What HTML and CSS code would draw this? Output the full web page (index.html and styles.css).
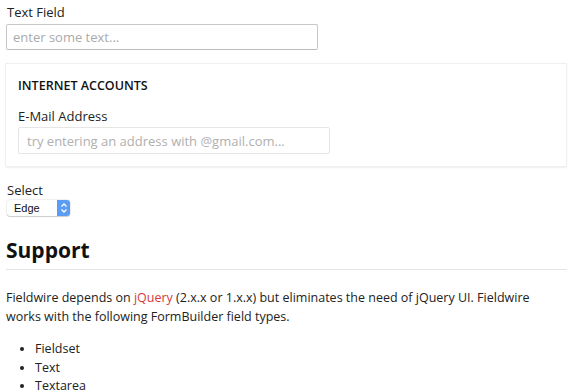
FILE: index.html
```html
<!DOCTYPE html>
<html lang="en">
<head>
    <meta charset="utf-8">
    <title>Fieldwire</title>
    <link rel="stylesheet" href="styles.css">
</head>
<body>
    <!-- text field -->
    <div class="field">
        <label for="txt">Text Field</label>
        <input type="text" id="txt" class="txtInput" placeholder="enter some text...">
    </div>

    <!-- fieldset -->
    <fieldset class="panel">
        <legend>Internet Accounts</legend>
        <label for="mail">E-Mail Address</label>
        <input type="text" id="mail" class="mailInput" placeholder="try entering an address with @gmail.com...">
    </fieldset>

    <!-- select -->
    <div class="field selField">
        <label>Select</label>
        <div class="sel">
            <span>Edge</span>
            <i class="stepper">
                <svg width="8" height="12" viewBox="0 0 8 12"><path d="M1.5 4.5 L4 2 L6.5 4.5 M1.5 7.5 L4 10 L6.5 7.5" fill="none" stroke="#fff" stroke-width="1.3"/></svg>
            </i>
        </div>
    </div>

    <h2>Support</h2>
    <p>Fieldwire depends on <a href="#">jQuery</a> (2.x.x or 1.x.x) but eliminates the need of jQuery UI. Fieldwire works with the following FormBuilder field types.</p>
    <ul>
        <li>Fieldset</li>
        <li>Text</li>
        <li>Textarea</li>
    </ul>
</body>
</html>
```

FILE: styles.css
```css
* {margin: 0; padding: 0; box-sizing: border-box;}
body {font: 13px/18px "Open Sans", sans-serif; color: #222; padding: 3px 6px 0 6px; background: #fff;}
label {display: block; color: #222;}

.field {padding-left: 1px;}
.field label {margin-bottom: 3px;}
.txtInput {display: block; width: 312px; height: 26px; margin-left: -1px; border: 1px solid #c8c8c8; border-bottom-color: #bbb; border-radius: 2px; padding: 0 6px; font: 13px "Open Sans", sans-serif; color: #333; outline: none;}
.txtInput::placeholder {color: #aaa;}

.panel {border: none; margin-top: 14px; padding: 13px 12px 12px 12px; box-shadow: 0 0 0 1px #f0f0f0, 0 1px 2px rgba(0,0,0,.18); width: 560px;}
.panel legend {float: left; width: 100%; font-weight: 600; text-transform: uppercase; font-size: 12.5px; color: #111; margin-bottom: 12px;}
.panel label {clear: both; margin-bottom: 2px;}
.mailInput {display: block; width: 312px; height: 27px; border: 1px solid #e6e6e6; border-radius: 2px; padding: 0 8px; font: 13px "Open Sans", sans-serif; outline: none;}
.mailInput::placeholder {color: #b0b0b0;}

.selField {margin-top: 15px;}
.selField label {margin-bottom: 1px;}
.sel {display: flex; align-items: center; width: 63px; height: 16px; border-radius: 3px; box-shadow: 0 0 0 .5px rgba(0,0,0,.12), 0 1px 1px rgba(0,0,0,.15); font: 11px "Liberation Sans", sans-serif; color: #111;}
.sel span {flex: 1; padding-left: 7px;}
.stepper {display: flex; align-items: center; justify-content: center; width: 13px; height: 16px; background: #5b9cf5; border-radius: 0 3px 3px 0;}

h2 {font-size: 21px; line-height: 28px; font-weight: 700; color: #111; margin-top: 20px; padding-bottom: 5px; border-bottom: 1px solid #e4e4e4;}
p {margin-top: 18px; font-size: 12.5px; line-height: 19px; color: #222;}
a {color: #d9383a; text-decoration: none;}
ul {margin-top: 14px; padding-left: 29px; font-size: 12.5px; line-height: 18.5px;}
```
